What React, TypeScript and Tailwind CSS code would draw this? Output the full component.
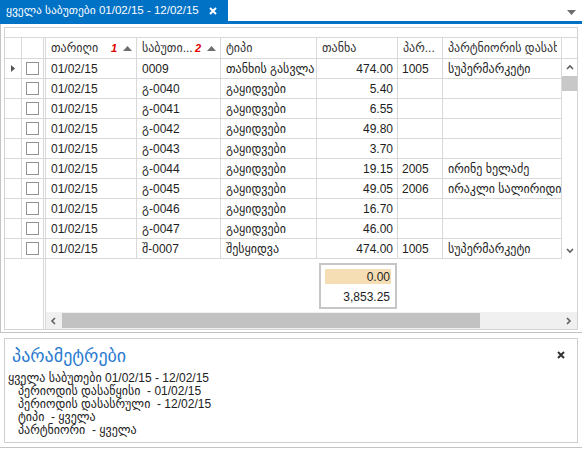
import React from 'react';

type Row = {
  date: string;
  doc: string;
  type: string;
  amount: string;
  code?: string;
  partner?: string;
  current?: boolean;
};

const rows: Row[] = [
  { date: '01/02/15', doc: '0009', type: 'თანხის გასვლა', amount: '474.00', code: '1005', partner: 'სუპერმარკეტი', current: true },
  { date: '01/02/15', doc: 'გ-0040', type: 'გაყიდვები', amount: '5.40' },
  { date: '01/02/15', doc: 'გ-0041', type: 'გაყიდვები', amount: '6.55' },
  { date: '01/02/15', doc: 'გ-0042', type: 'გაყიდვები', amount: '49.80' },
  { date: '01/02/15', doc: 'გ-0043', type: 'გაყიდვები', amount: '3.70' },
  { date: '01/02/15', doc: 'გ-0044', type: 'გაყიდვები', amount: '19.15', code: '2005', partner: 'ირინე ხელაძე' },
  { date: '01/02/15', doc: 'გ-0045', type: 'გაყიდვები', amount: '49.05', code: '2006', partner: 'ირაკლი სალირიდი' },
  { date: '01/02/15', doc: 'გ-0046', type: 'გაყიდვები', amount: '16.70' },
  { date: '01/02/15', doc: 'გ-0047', type: 'გაყიდვები', amount: '46.00' },
  { date: '01/02/15', doc: 'შ-0007', type: 'შესყიდვა', amount: '474.00', code: '1005', partner: 'სუპერმარკეტი' },
];

function SortUp() {
  return (
    <svg width="9" height="5" viewBox="0 0 9 5" className="shrink-0">
      <path d="M0 5 L4.5 0 L9 5 Z" fill="#6e6e6e" />
    </svg>
  );
}

function Chevron({ dir }: { dir: 'up' | 'down' | 'left' | 'right' }) {
  const d = {
    up: 'M1 5 L4 2 L7 5',
    down: 'M1 2 L4 5 L7 2',
    left: 'M5 1 L2 4 L5 7',
    right: 'M2 1 L5 4 L2 7',
  }[dir];
  return (
    <svg width="8" height="8" viewBox="0 0 8 8">
      <path d={d} fill="none" stroke="#5f5f5f" strokeWidth="1.6" />
    </svg>
  );
}

function HeaderCell({ w, children, num }: { w: string; children: React.ReactNode; num?: string }) {
  return (
    <div className={`${w} shrink-0 h-full border-r border-[#d9d9d9] flex items-center pl-[5px] pr-[4px] overflow-hidden whitespace-nowrap`}>
      <span className="flex-1 overflow-hidden">{children}</span>
      {num && (
        <>
          <span className="text-[#e00000] italic font-bold text-[11px] mr-[6px]">{num}</span>
          <SortUp />
        </>
      )}
    </div>
  );
}

export default function App() {
  return (
    <div className="w-[582px] h-[449px] bg-white overflow-hidden text-[12px] text-[#1e1e1e] font-['Liberation_Sans','DejaVu_Sans',sans-serif]">
      {/* tab strip */}
      <div className="h-[21px] flex items-stretch">
        <div className="w-[228px] bg-[#0072c6] text-white flex items-center pl-[6px] whitespace-nowrap">
          <span className="text-[11.5px]">ყველა საბუთები 01/02/15 - 12/02/15</span>
          <svg width="8" height="8" viewBox="0 0 8 8" className="ml-[10px]">
            <path d="M1 1 L7 7 M7 1 L1 7" stroke="white" strokeWidth="2" />
          </svg>
        </div>
        <div className="flex-1 flex items-center justify-end pr-[6px]">
          <svg width="9" height="5" viewBox="0 0 9 5" className="mt-[4px]">
            <path d="M0 0 L9 0 L4.5 5 Z" fill="#6e6e6e" />
          </svg>
        </div>
      </div>
      <div className="h-[3px] bg-[#0072c6]" />

      {/* grid section */}
      <div className="border-l border-b border-[#c4c4c4] pt-[3px] pl-[3px] pb-[2px]">
        <div className="w-[574px] h-[303px] border border-[#d3d3d3] flex flex-col">
          <div className="h-[10px] border-b border-[#d9d9d9] shrink-0" />
          {/* header */}
          <div className="h-[21px] border-b border-[#d9d9d9] flex shrink-0 text-[#333]">
            <div className="w-[17px] shrink-0 h-full border-r border-[#d9d9d9]" />
            <div className="w-[24px] shrink-0 h-full border-r-[3px] border-double border-[#d9d9d9]" />
            <HeaderCell w="w-[91px]" num="1">თარიღი</HeaderCell>
            <HeaderCell w="w-[84px]" num="2">საბუთი...</HeaderCell>
            <HeaderCell w="w-[96px]">ტიპი</HeaderCell>
            <HeaderCell w="w-[81px]">თანხა</HeaderCell>
            <HeaderCell w="w-[45px]">პარ...</HeaderCell>
            <HeaderCell w="w-[119px]">პარტნიორის დასახელება</HeaderCell>
            <div className="flex-1" />
          </div>
          {/* rows */}
          <div className="flex shrink-0">
            <div className="flex flex-col">
              {rows.map((r, i) => (
                <div key={i} className="h-[20px] border-b border-[#d9d9d9] flex whitespace-nowrap">
                  <div className="w-[17px] shrink-0 border-r border-[#d9d9d9] flex items-center justify-center">
                    {r.current && (
                      <svg width="4" height="7" viewBox="0 0 4 7">
                        <path d="M0 0 L4 3.5 L0 7 Z" fill="#555" />
                      </svg>
                    )}
                  </div>
                  <div className="w-[24px] shrink-0 border-r-[3px] border-double border-[#d9d9d9] flex items-center justify-center">
                    <div className="w-[13px] h-[13px] border border-[#929292] bg-white" />
                  </div>
                  <div className="w-[91px] shrink-0 border-r border-[#d9d9d9] flex items-center pl-[5px]">{r.date}</div>
                  <div className="w-[84px] shrink-0 border-r border-[#d9d9d9] flex items-center pl-[5px]">{r.doc}</div>
                  <div className="w-[96px] shrink-0 border-r border-[#d9d9d9] flex items-center pl-[5px] overflow-hidden">{r.type}</div>
                  <div className="w-[81px] shrink-0 border-r border-[#d9d9d9] flex items-center justify-end pr-[4px]">{r.amount}</div>
                  <div className="w-[45px] shrink-0 border-r border-[#d9d9d9] flex items-center pl-[4px]">{r.code}</div>
                  <div className="w-[119px] shrink-0 border-r border-[#d9d9d9] flex items-center pl-[5px] overflow-hidden">{r.partner}</div>
                </div>
              ))}
            </div>
            {/* vertical scrollbar */}
            <div className="w-[16px] h-[200px] flex flex-col items-center bg-white">
              <div className="h-[17px] flex items-center justify-center">
                <Chevron dir="up" />
              </div>
              <div className="w-[15px] h-[15px] bg-[#c8c8c8]" />
              <div className="flex-1" />
              <div className="h-[17px] flex items-center justify-center">
                <Chevron dir="down" />
              </div>
            </div>
          </div>
          {/* footer */}
          <div className="flex-1 flex">
            <div className="w-[41px] shrink-0 border-r-[3px] border-double border-[#d9d9d9]" />
            <div className="flex-1 flex flex-col">
              <div className="flex-1 flex pt-[4px]">
                <div className="w-[273px] shrink-0" />
                <div className="w-[78px] h-[46px] border-2 border-[#c6c6c6] flex flex-col px-[4px] pt-[4px]">
                  <div className="h-[15px] bg-[#f5deb3] flex items-center justify-end pr-[1px]">0.00</div>
                  <div className="flex-1 flex items-center justify-end pr-[1px] pt-[3px]">3,853.25</div>
                </div>
              </div>
              <div className="h-[17px] bg-[#f0f0f0] flex items-center">
                <div className="w-[16px] flex items-center justify-center">
                  <Chevron dir="left" />
                </div>
                <div className="w-[418px] h-[15px] bg-[#c2c2c2]" />
                <div className="flex-1" />
                <div className="w-[16px] flex items-center justify-center">
                  <Chevron dir="right" />
                </div>
              </div>
            </div>
          </div>
        </div>
      </div>

      {/* parameters section */}
      <div className="pt-[5px] pl-[4px] pb-[4px] border-b border-[#c4c4c4]">
        <div className="relative w-[574px] h-[105px] border border-[#cfcfcf] px-[3px] pt-[5px] text-[#222]">
          <div className="text-[18px] leading-[25px] text-[#2b7bd0] pl-[4px]">პარამეტრები</div>
          <svg width="8" height="8" viewBox="0 0 8 8" className="absolute right-[12px] top-[12px]">
            <path d="M1 1 L7 7 M7 1 L1 7" stroke="#333" strokeWidth="2" />
          </svg>
          <div className="leading-[13px] mt-[3px]">
            <div>ყველა საბუთები 01/02/15 - 12/02/15</div>
            <div className="pl-[10px]">პერიოდის დასაწყისი&nbsp; - 01/02/15</div>
            <div className="pl-[10px]">პერიოდის დასასრული&nbsp; - 12/02/15</div>
            <div className="pl-[10px]">ტიპი&nbsp; - ყველა</div>
            <div className="pl-[10px]">პარტნიორი&nbsp; - ყველა</div>
          </div>
        </div>
      </div>
    </div>
  );
}
